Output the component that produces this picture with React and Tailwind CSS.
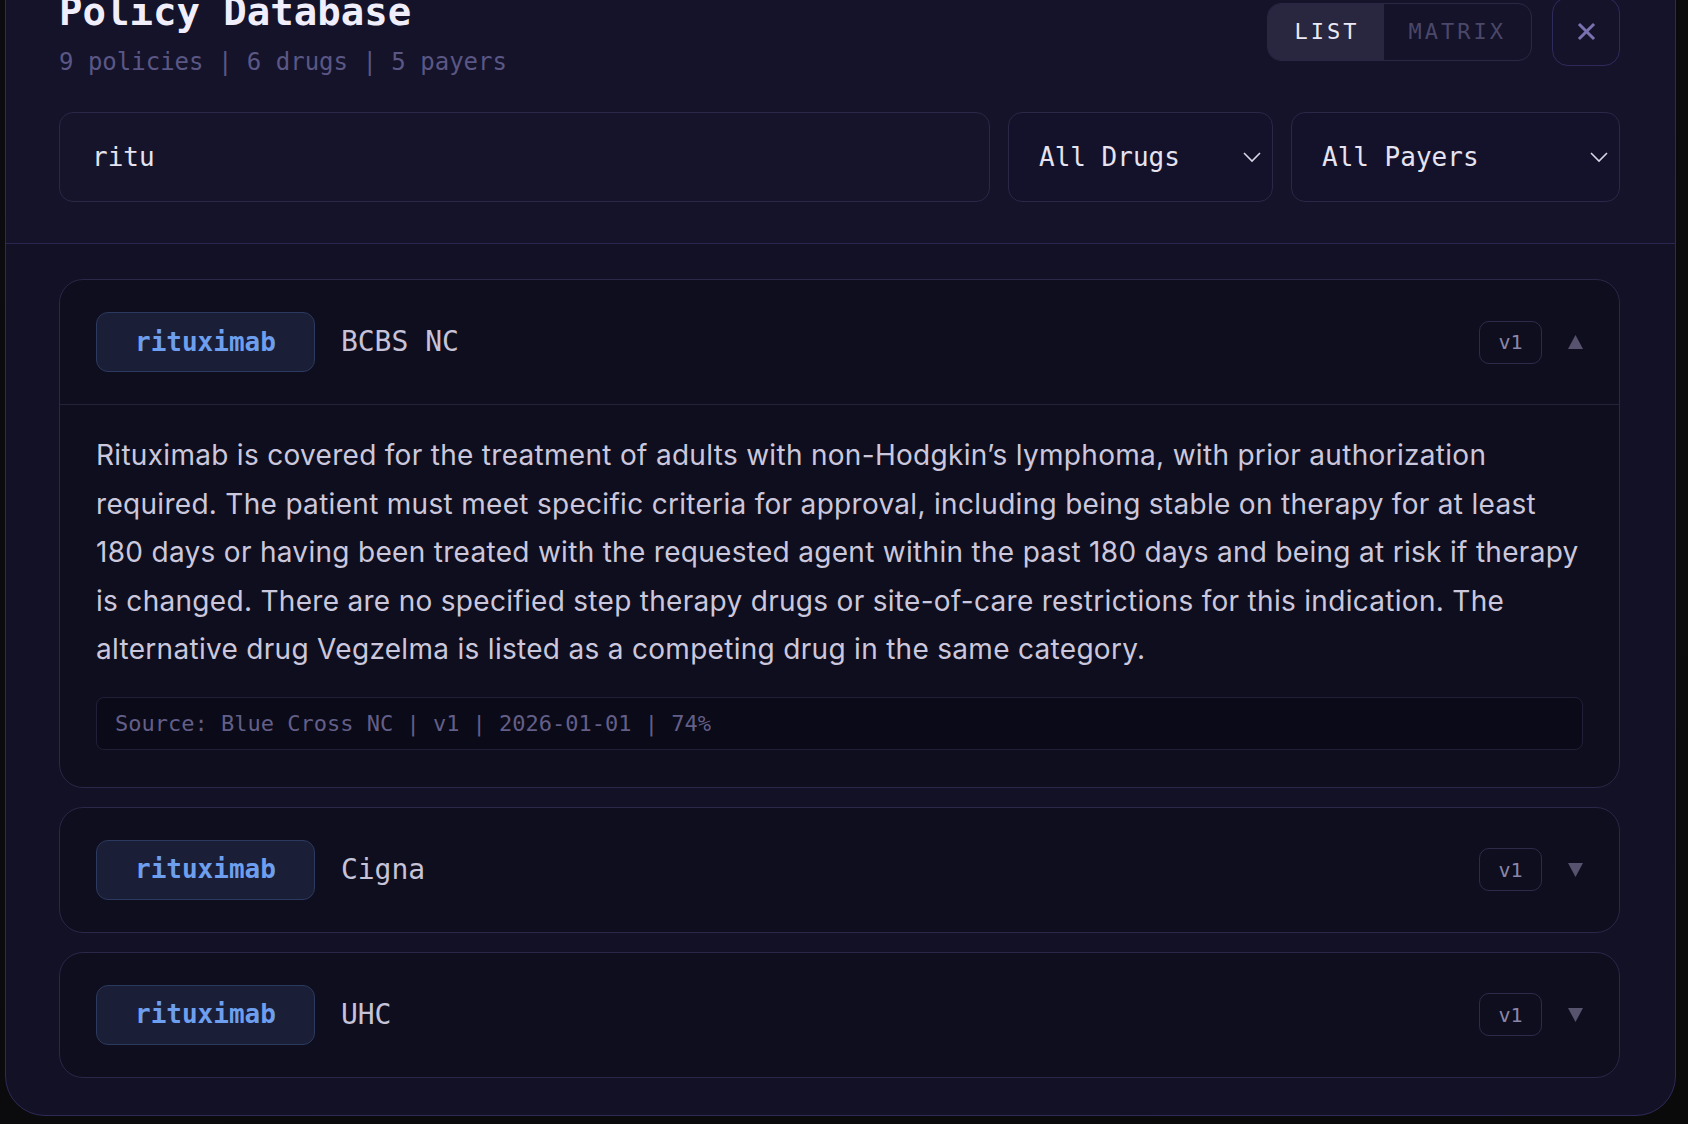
const mono = { fontFamily: '"DejaVu Sans Mono", "Liberation Mono", monospace' }

const policies = [
  {
    id: 1,
    drug: 'rituximab',
    payer: 'BCBS NC',
    version: 'v1',
    open: true,
    summary:
      'Rituximab is covered for the treatment of adults with non-Hodgkin’s lymphoma, with prior authorization required. The patient must meet specific criteria for approval, including being stable on therapy for at least 180 days or having been treated with the requested agent within the past 180 days and being at risk if therapy is changed. There are no specified step therapy drugs or site-of-care restrictions for this indication. The alternative drug Vegzelma is listed as a competing drug in the same category.',
    source: 'Source: Blue Cross NC | v1 | 2026-01-01 | 74%'
  },
  { id: 2, drug: 'rituximab', payer: 'Cigna', version: 'v1', open: false },
  { id: 3, drug: 'rituximab', payer: 'UHC', version: 'v1', open: false }
]

function Caret({ up }) {
  return (
    <svg width="17" height="16" viewBox="0 0 17 16" className="shrink-0">
      <polygon points={up ? '8.5,1 16,15 1,15' : '1,1 16,1 8.5,15'} fill="#57536f" />
    </svg>
  )
}

function Chevron() {
  return (
    <svg width="20" height="12" viewBox="0 0 20 12" className="shrink-0">
      <path d="M2 2 L10 10 L18 2" fill="none" stroke="#d8d5e6" strokeWidth="1.6" />
    </svg>
  )
}

function PolicyCard({ policy }) {
  return (
    <div className="rounded-[24px] border border-[#2a2748] bg-[#0f0e1e]">
      <div
        className={
          'flex items-center pl-[36px] pr-[35px] pt-[32px] pb-[32px] ' +
          (policy.open ? 'border-b border-[#24223b]' : '')
        }
      >
        <span
          className="flex h-[60px] items-center rounded-[12px] border border-[#2b3a5e] bg-[#1a1e36] px-[38px] text-[26px] font-bold text-[#6d9fee]"
          style={mono}
        >
          {policy.drug}
        </span>
        <span className="ml-[26px] text-[28px] text-[#c6c3d8]" style={mono}>
          {policy.payer}
        </span>
        <span
          className="ml-auto flex h-[43px] w-[63px] items-center justify-center rounded-[10px] border border-[#2e2b4a] text-[20px] text-[#8a86a8]"
          style={mono}
        >
          {policy.version}
        </span>
        <span className="ml-[25px]">
          <Caret up={policy.open} />
        </span>
      </div>
      {policy.open && (
        <div className="px-[36px] pt-[26px] pb-[37px]">
          <p className="mr-[-8px] font-['Inter'] text-[28px] leading-[48.6px] tracking-[0.3px] text-[#cbc8dd]">
            {policy.summary}
          </p>
          <div
            className="mt-[23px] flex h-[53px] items-center rounded-[8px] border border-[#211f37] bg-[#0b0a18] px-[18px] text-[22px] text-[#635f88]"
            style={mono}
          >
            {policy.source}
          </div>
        </div>
      )}
    </div>
  )
}

export default function App() {
  return (
    <div className="h-[1124px] overflow-hidden bg-gradient-to-br from-[#0c0c10] to-[#0a0a0b]">
      <div className="ml-[5px] mt-[-39px] w-[1671px] rounded-b-[40px] border border-[#2e2a58] bg-[#121126]" style={mono}>
        <div className="border-b border-[#2a2650] bg-[#14132a] pl-[53px] pr-[55px] pt-[26px] pb-[41px]">
          <div className="flex items-start justify-between">
            <div>
              <h2 className="text-[39px] font-bold leading-[48px] text-[#f1eefb]">Policy Database</h2>
              <div className="mt-[10px] text-[24px] leading-[32px] text-[#5b5785]">
                9 policies | 6 drugs | 5 payers
              </div>
            </div>
            <div className="mt-[9px] flex items-center gap-[20px]">
              <div className="flex h-[58px] overflow-hidden rounded-[14px] border border-[#2a2745]">
                <button className="bg-[#29263f] pl-[27px] pr-[24px] text-[22px] tracking-[3px] text-[#ece9f7]">LIST</button>
                <button className="px-[25px] text-[22px] tracking-[3px] text-[#4b4768]">MATRIX</button>
              </div>
              <button className="flex h-[69px] w-[68px] items-center justify-center rounded-[16px] border border-[#2f2a5c]">
                <svg width="19" height="19" viewBox="0 0 19 19">
                  <path d="M3 3 L16 16 M16 3 L3 16" stroke="#7a72b0" strokeWidth="3" strokeLinecap="square" />
                </svg>
              </button>
            </div>
          </div>
          <div className="mt-[34px] flex gap-[18px]">
            <div className="flex h-[90px] flex-1 items-center rounded-[14px] border border-[#2a2846] bg-[#15142b] pl-[32px] text-[26px] text-[#e6e3f0]">
              ritu
            </div>
            <div className="flex h-[90px] w-[265px] items-center justify-between rounded-[14px] border border-[#2a2846] bg-[#13122a] pl-[30px] pr-[10px] text-[26px] text-[#e6e3f0]">
              All Drugs
              <Chevron />
            </div>
            <div className="flex h-[90px] w-[329px] items-center justify-between rounded-[14px] border border-[#2a2846] bg-[#13122a] pl-[30px] pr-[10px] text-[26px] text-[#e6e3f0]">
              All Payers
              <Chevron />
            </div>
          </div>
        </div>
        <div className="flex flex-col gap-[19px] pl-[53px] pr-[55px] pt-[35px] pb-[37px]">
          {policies.map((p) => (
            <PolicyCard key={p.id} policy={p} />
          ))}
        </div>
      </div>
    </div>
  )
}
